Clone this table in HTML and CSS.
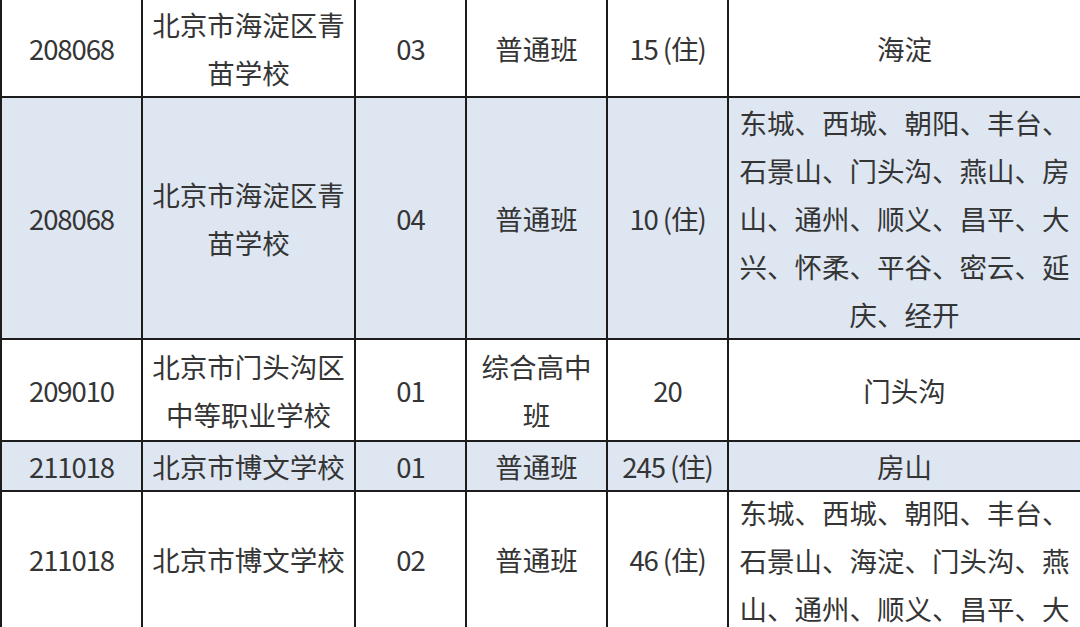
FILE: index.html
```html
<!DOCTYPE html>
<html lang="zh-CN">
<head>
<meta charset="utf-8">
<title>招生计划</title>
<link rel="stylesheet" href="styles.css">
</head>
<body>
<table class="plan">
  <colgroup>
    <col class="c-code">
    <col class="c-school">
    <col class="c-no">
    <col class="c-class">
    <col class="c-count">
    <col class="c-area">
  </colgroup>
  <tbody>
    <tr class="row">
      <td class="num">208068</td>
      <td>北京市海淀区青苗学校</td>
      <td class="num">03</td>
      <td>普通班</td>
      <td class="num">15 (住)</td>
      <td>海淀</td>
    </tr>
    <tr class="row blue">
      <td class="num">208068</td>
      <td>北京市海淀区青苗学校</td>
      <td class="num">04</td>
      <td>普通班</td>
      <td class="num">10 (住)</td>
      <td>东城、西城、朝阳、丰台、石景山、门头沟、燕山、房山、通州、顺义、昌平、大兴、怀柔、平谷、密云、延庆、经开</td>
    </tr>
    <tr class="row padded">
      <td class="num">209010</td>
      <td>北京市门头沟区中等职业学校</td>
      <td class="num">01</td>
      <td>综合高中班</td>
      <td class="num">20</td>
      <td>门头沟</td>
    </tr>
    <tr class="row blue">
      <td class="num">211018</td>
      <td>北京市博文学校</td>
      <td class="num">01</td>
      <td>普通班</td>
      <td class="num">245 (住)</td>
      <td>房山</td>
    </tr>
    <tr class="row last">
      <td class="num up">211018</td>
      <td class="up">北京市博文学校</td>
      <td class="num up">02</td>
      <td class="up">普通班</td>
      <td class="num up">46 (住)</td>
      <td class="area-top"><div class="lift">东城、西城、朝阳、丰台、石景山、海淀、门头沟、燕山、通州、顺义、昌平、大兴、怀柔、平谷、密云、延庆、经开</div></td>
    </tr>
  </tbody>
</table>
</body>
</html>
```

FILE: styles.css
```css
html, body {
  margin: 0;
  padding: 0;
  background: #ffffff;
  overflow: hidden;
}

.plan {
  border-collapse: collapse;
  table-layout: fixed;
  width: 1080px;
  margin-top: -2px;
  font-family: "Noto Sans CJK SC", "Noto Sans", sans-serif;
  font-size: 27.5px;
  line-height: 48px;
  color: #353535;
}

.c-code { width: 141px; }
.c-school { width: 213px; }
.c-no { width: 111px; }
.c-class { width: 141px; }
.c-count { width: 121px; }
.c-area { width: 353px; }

.plan td {
  border: 2px solid #1c1c1c;
  padding: 0 3px;
  text-align: center;
  vertical-align: middle;
  word-break: break-all;
}

.plan td:first-child {
  padding: 0;
}

.plan td.num {
  letter-spacing: -1.1px;
  word-spacing: 0;
}

.blue td {
  background: #dee6f2;
}

.padded td {
  padding-top: 2px;
  padding-bottom: 2px;
}

.last td.up {
  vertical-align: top;
  padding-top: 43px;
}

.last td.area-top {
  vertical-align: top;
  padding-top: 0;
}

.lift {
  margin-top: -4px;
}
```
